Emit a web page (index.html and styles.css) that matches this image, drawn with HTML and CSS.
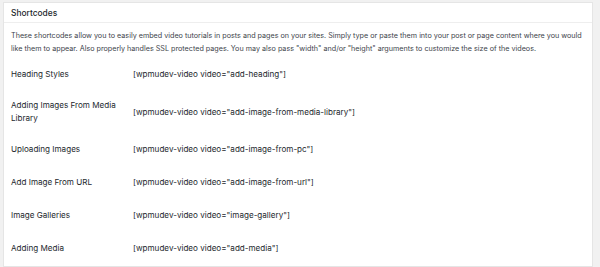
FILE: index.html
```html
<!DOCTYPE html>
<html lang="en">
<head>
<meta charset="utf-8">
<title>Shortcodes</title>
<link rel="stylesheet" href="styles.css">
</head>
<body>
<div class="postbox">
  <h2 class="hndle">Shortcodes</h2>
  <div class="inside">
    <p class="desc">These shortcodes allow you to easily embed video tutorials in posts and pages on your sites. Simply type or paste them into your post or page content where you would like them to appear. Also properly handles SSL protected pages. You may also pass "width" and/or "height" arguments to customize the size of the videos.</p>
    <table class="form-table">
      <tbody>
        <tr><th>Heading Styles</th><td>[wpmudev-video video="add-heading"]</td></tr>
        <tr><th>Adding Images From Media Library</th><td>[wpmudev-video video="add-image-from-media-library"]</td></tr>
        <tr><th>Uploading Images</th><td>[wpmudev-video video="add-image-from-pc"]</td></tr>
        <tr><th>Add Image From URL</th><td>[wpmudev-video video="add-image-from-url"]</td></tr>
        <tr><th>Image Galleries</th><td>[wpmudev-video video="image-gallery"]</td></tr>
        <tr><th>Adding Media</th><td>[wpmudev-video video="add-media"]</td></tr>
      </tbody>
    </table>
  </div>
</div>
</body>
</html>
```

FILE: styles.css
```css
html, body {
  margin: 0;
  padding: 0;
  background: #f1f1f1;
}
body {
  padding: 2px 7px 0 3px;
  font-family: "Inter", "Liberation Sans", sans-serif;
  color: #23282d;
  height: 267px;
  box-sizing: border-box;
  overflow: hidden;
}
.postbox {
  background: #fff;
  border: 1px solid #e5e5e5;
  height: 100%;
  box-sizing: border-box;
}
.hndle {
  margin: 0;
  font-size: 8.4px;
  font-weight: 500;
  line-height: 12px;
  padding: 4px 7px 3px;
  border-bottom: 1px solid #eeeeee;
}
.inside {
  padding: 0 7px;
}
.desc {
  margin: 6px 0 0;
  font-size: 7.2px;
  line-height: 13px;
  color: #3c434a;
}
.form-table {
  border-collapse: collapse;
  margin-top: 3px;
  width: 100%;
}
.form-table th {
  text-align: left;
  font-weight: 400;
  font-size: 8.1px;
  line-height: 13px;
  vertical-align: middle;
  width: 112px;
  padding: 8px 10px 8px 0;
}
.form-table td {
  font-size: 8.1px;
  line-height: 13px;
  vertical-align: middle;
  padding: 10px 0;
}
```
